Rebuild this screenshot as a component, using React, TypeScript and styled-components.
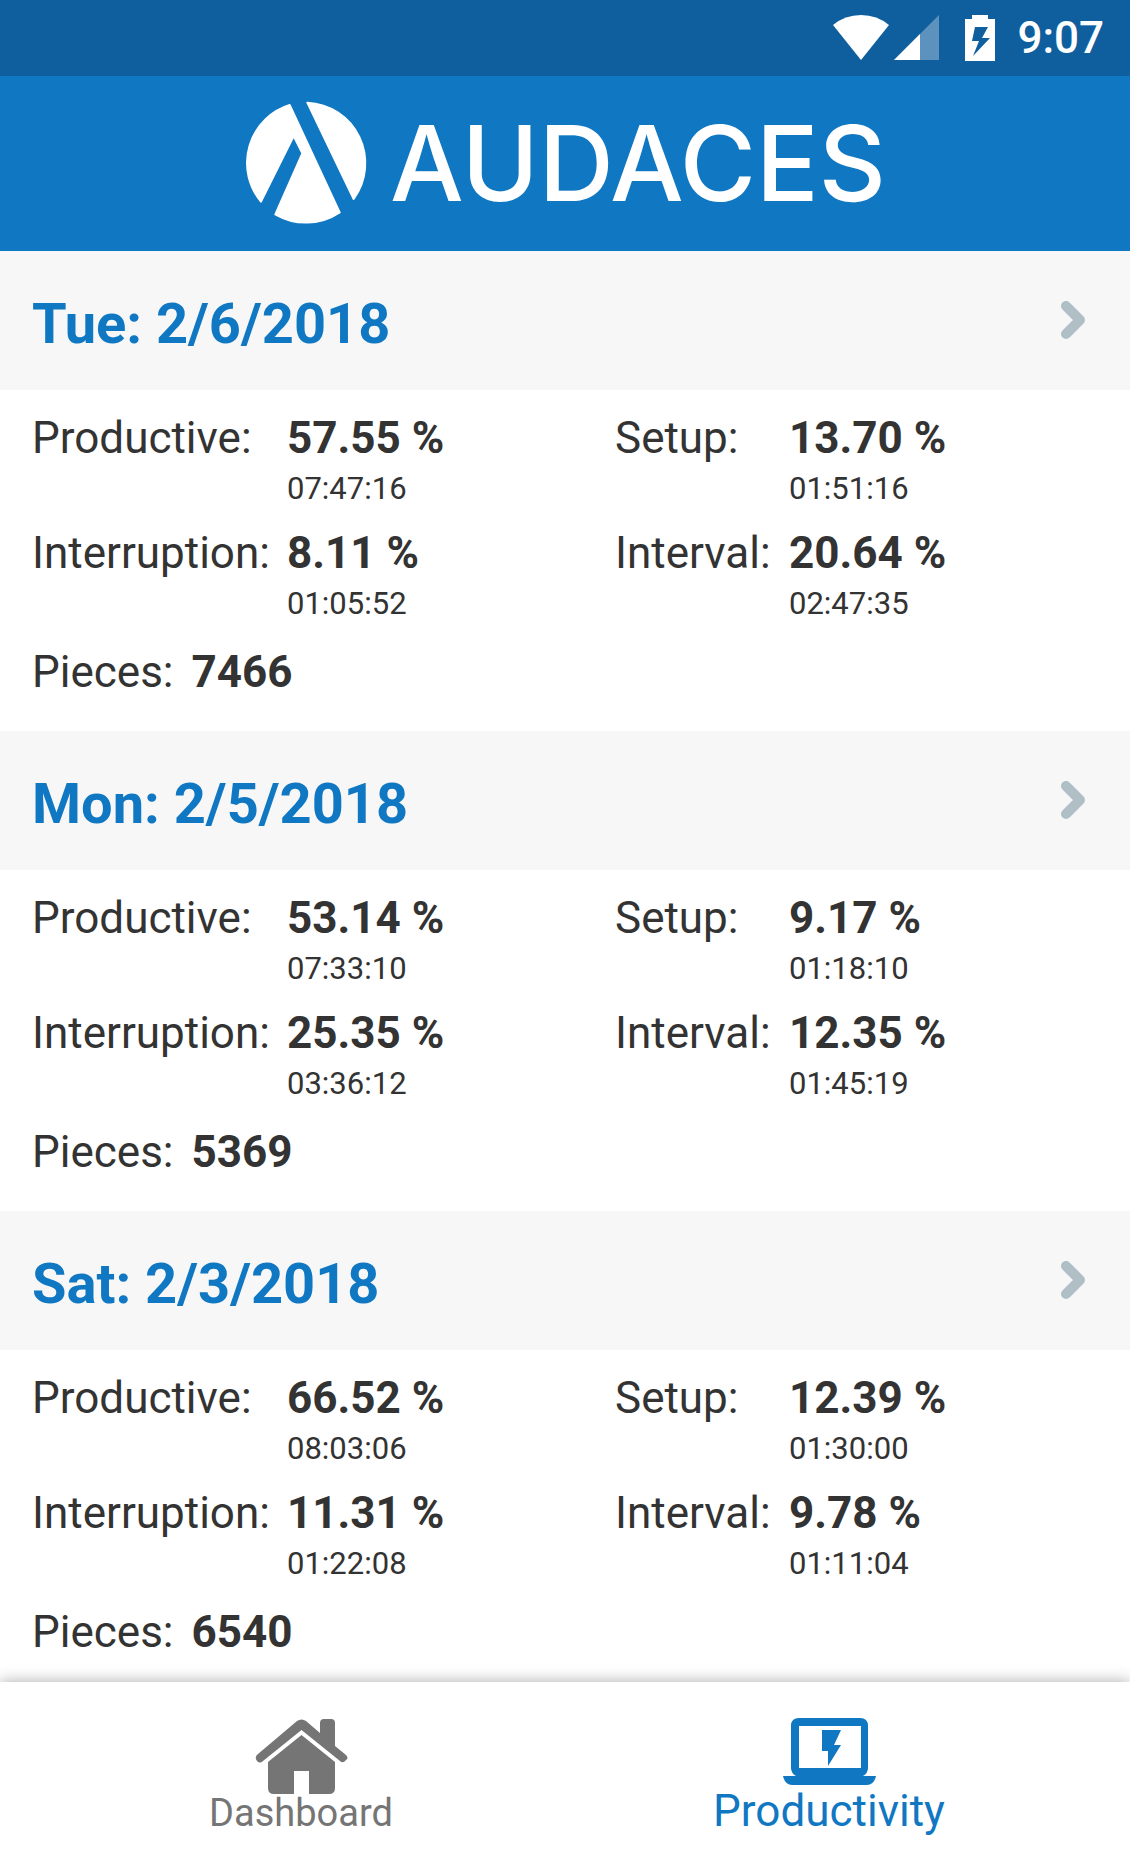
import React from "react";
import styled, { createGlobalStyle } from "styled-components";

const GlobalStyle = createGlobalStyle`
  * { box-sizing: border-box; }
  body {
    margin: 0;
    background: #ffffff;
    color: #333333;
    font-family: Roboto, "Liberation Sans", sans-serif;
  }
`;

const Screen = styled.div`
  display: flex;
  flex-direction: column;
  height: 100vh;
`;

const StatusBar = styled.div`
  flex: none;
  display: flex;
  align-items: center;
  justify-content: flex-end;
  height: 76px;
  padding: 0 26px;
  background: #0f5f9e;
  color: #ffffff;
`;

const StatusIcon = styled.svg<{ $gap: number }>`
  flex: none;
  display: block;
  margin-right: ${(p) => p.$gap}px;
`;

const Clock = styled.time`
  font-size: 44px;
  line-height: 52px;
  font-weight: 500;
`;

const Brand = styled.header`
  flex: none;
  display: flex;
  align-items: center;
  justify-content: center;
  gap: 22px;
  height: 175px;
  padding-bottom: 2px;
  background: #1077c2;
  color: #ffffff;
`;

const BrandMark = styled.svg`
  display: block;
  width: 124px;
  height: 124px;
`;

const BrandName = styled.h1`
  margin: 0;
  font-family: Inter, sans-serif;
  font-size: 104px;
  line-height: 120px;
  font-weight: 500;
`;

const DayList = styled.main`
  flex: 1;
  min-height: 0;
  overflow-y: auto;
  scrollbar-width: none;
`;

const DayHeading = styled.h2`
  margin: 0;
`;

const DayButton = styled.button`
  display: flex;
  align-items: flex-start;
  justify-content: space-between;
  width: 100%;
  padding: 37px 45px 30px 32px;
  border: 0;
  background: #f7f7f7;
  color: #1077c2;
  font-family: inherit;
  font-size: 56px;
  line-height: 72px;
  font-weight: 700;
  text-align: left;
  cursor: pointer;
`;

const Chevron = styled.svg`
  display: block;
  width: 24px;
  height: 64px;
`;

const DayBody = styled.div`
  padding: 20px 32px 31px;
`;

const Metrics = styled.dl`
  display: grid;
  grid-template-columns: 255fr 328fr 174fr 309fr;
  row-gap: 13px;
  margin: 0 0 17px;
`;

const Label = styled.dt`
  font-size: 44px;
  line-height: 56px;
  white-space: nowrap;
`;

const Value = styled.dd`
  margin: 0;
`;

const Figure = styled.strong`
  display: block;
  font-size: 44px;
  line-height: 56px;
  font-weight: 700;
`;

const Duration = styled.time`
  display: block;
  font-size: 31px;
  line-height: 46px;
`;

const Pieces = styled.dl`
  display: flex;
  gap: 18px;
  margin: 0;
`;

const TabBar = styled.nav`
  position: relative;
  flex: none;
  display: flex;
  align-items: stretch;
  height: 175px;
  padding: 0 37px 20px;
  background: #ffffff;
  box-shadow: 0 -1px 14px rgba(0, 0, 0, 0.3);
`;

const Tab = styled.a<{ $active?: boolean }>`
  flex: 1;
  display: flex;
  flex-direction: column;
  align-items: center;
  justify-content: flex-end;
  color: ${(p) => (p.$active ? "#1077c2" : "#757575")};
  font-size: ${(p) => (p.$active ? 44 : 38)}px;
  line-height: ${(p) => (p.$active ? 52 : 48)}px;
  text-decoration: none;
`;

const TabIcon = styled.svg`
  display: block;
  width: 93px;
  overflow: visible;
`;

type Metric = { label: string; percent: string; time: string };
type Day = { title: string; metrics: Metric[]; pieces: string };

const metric = (label: string, percent: string, time: string): Metric => ({ label, percent, time });

const days: Day[] = [
  {
    title: "Tue: 2/6/2018",
    metrics: [
      metric("Productive:", "57.55 %", "07:47:16"),
      metric("Setup:", "13.70 %", "01:51:16"),
      metric("Interruption:", "8.11 %", "01:05:52"),
      metric("Interval:", "20.64 %", "02:47:35"),
    ],
    pieces: "7466",
  },
  {
    title: "Mon: 2/5/2018",
    metrics: [
      metric("Productive:", "53.14 %", "07:33:10"),
      metric("Setup:", "9.17 %", "01:18:10"),
      metric("Interruption:", "25.35 %", "03:36:12"),
      metric("Interval:", "12.35 %", "01:45:19"),
    ],
    pieces: "5369",
  },
  {
    title: "Sat: 2/3/2018",
    metrics: [
      metric("Productive:", "66.52 %", "08:03:06"),
      metric("Setup:", "12.39 %", "01:30:00"),
      metric("Interruption:", "11.31 %", "01:22:08"),
      metric("Interval:", "9.78 %", "01:11:04"),
    ],
    pieces: "6540",
  },
];

function DaySection({ day }: { day: Day }) {
  return (
    <section>
      <DayHeading>
        <DayButton type="button">
          {day.title}
          <Chevron viewBox="0 0 24 64" aria-hidden="true">
            <path d="M5 18 L19 32 L5 46" fill="none" stroke="#b0bec5" strokeWidth="10" strokeLinecap="round" strokeLinejoin="round" />
          </Chevron>
        </DayButton>
      </DayHeading>
      <DayBody>
        <Metrics>
          {day.metrics.map((m) => (
            <React.Fragment key={m.label}>
              <Label>{m.label}</Label>
              <Value>
                <Figure>{m.percent}</Figure>
                <Duration>{m.time}</Duration>
              </Value>
            </React.Fragment>
          ))}
        </Metrics>
        <Pieces>
          <Label>Pieces:</Label>
          <Value>
            <Figure>{day.pieces}</Figure>
          </Value>
        </Pieces>
      </DayBody>
    </section>
  );
}

export default function App() {
  return (
    <Screen>
      <GlobalStyle />
      <StatusBar>
        <StatusIcon $gap={5} width="56" height="46" viewBox="0 0 56 46" aria-hidden="true">
          <path d="M0 10 Q12 0 28 0 Q44 0 56 10 L28 45 Z" fill="#ffffff" />
        </StatusIcon>
        <StatusIcon $gap={26} width="45" height="46" viewBox="0 0 45 46" aria-hidden="true">
          <path d="M45 0 V45 H0 Z" fill="#ffffff" fillOpacity="0.32" />
          <path d="M26 19 V45 H0 Z" fill="#ffffff" />
        </StatusIcon>
        <StatusIcon $gap={22} width="30" height="46" viewBox="0 0 30 46" aria-hidden="true">
          <path
            d="M7 0 H23 V4 H30 V46 H0 V4 H7 Z M10 12 L7 26 H14 L8 41 L25 23 H17 L23 12 Z"
            fill="#ffffff"
            fillRule="evenodd"
          />
        </StatusIcon>
        <Clock>9:07</Clock>
      </StatusBar>
      <Brand>
        <BrandMark viewBox="39 63 372 372" aria-hidden="true">
          <g fill="#ffffff" stroke="#ffffff" strokeWidth="6" strokeLinejoin="round">
            <path d="M176 75 L326 397 A182 182 0 0 1 133 403 L214 220 L188 168 L90 365 A182 182 0 0 1 176 75 Z" />
            <path d="M229 68 A182 182 0 0 1 368 357 Z" />
          </g>
        </BrandMark>
        <BrandName>AUDACES</BrandName>
      </Brand>
      <DayList>
        {days.map((day) => (
          <DaySection key={day.title} day={day} />
        ))}
      </DayList>
      <TabBar>
        <Tab href="#dashboard">
          <TabIcon viewBox="0 0 93 70" height="70" aria-hidden="true">
            <g fill="#757575">
              <path d="M3 35 L42 2 Q46.500 -1 51 2 L65 14 V4 Q65 0 69 0 H76 Q80 0 80 4 V27 L91 36 Q94 39 91 41 Q88 45 85 42 L46.500 11 L8 42 Q5 45 2 42 Q-1 38 3 35 Z" />
              <path d="M46.500 16 L80 43 V69 Q80 75 74 75 H54 V52 H39 V75 H19 Q13 75 13 69 V43 Z" />
            </g>
          </TabIcon>
          Dashboard
        </Tab>
        <Tab href="#productivity" $active aria-current="page">
          <TabIcon viewBox="0 0 93 67" height="67" aria-hidden="true">
            <g fill="#1077c2">
              <path
                d="M16 0 H77 Q85 0 85 8 V50 Q85 55 80 58 H93 Q91 67 84 67 H9 Q2 67 0 58 H13 Q8 55 8 50 V8 Q8 0 16 0 Z M16 8 V50 H78 V8 Z"
                fillRule="evenodd"
              />
              <path d="M39 12 H58 L51 27 H58 L45 48 V33 H39 Z" />
            </g>
          </TabIcon>
          Productivity
        </Tab>
      </TabBar>
    </Screen>
  );
}
